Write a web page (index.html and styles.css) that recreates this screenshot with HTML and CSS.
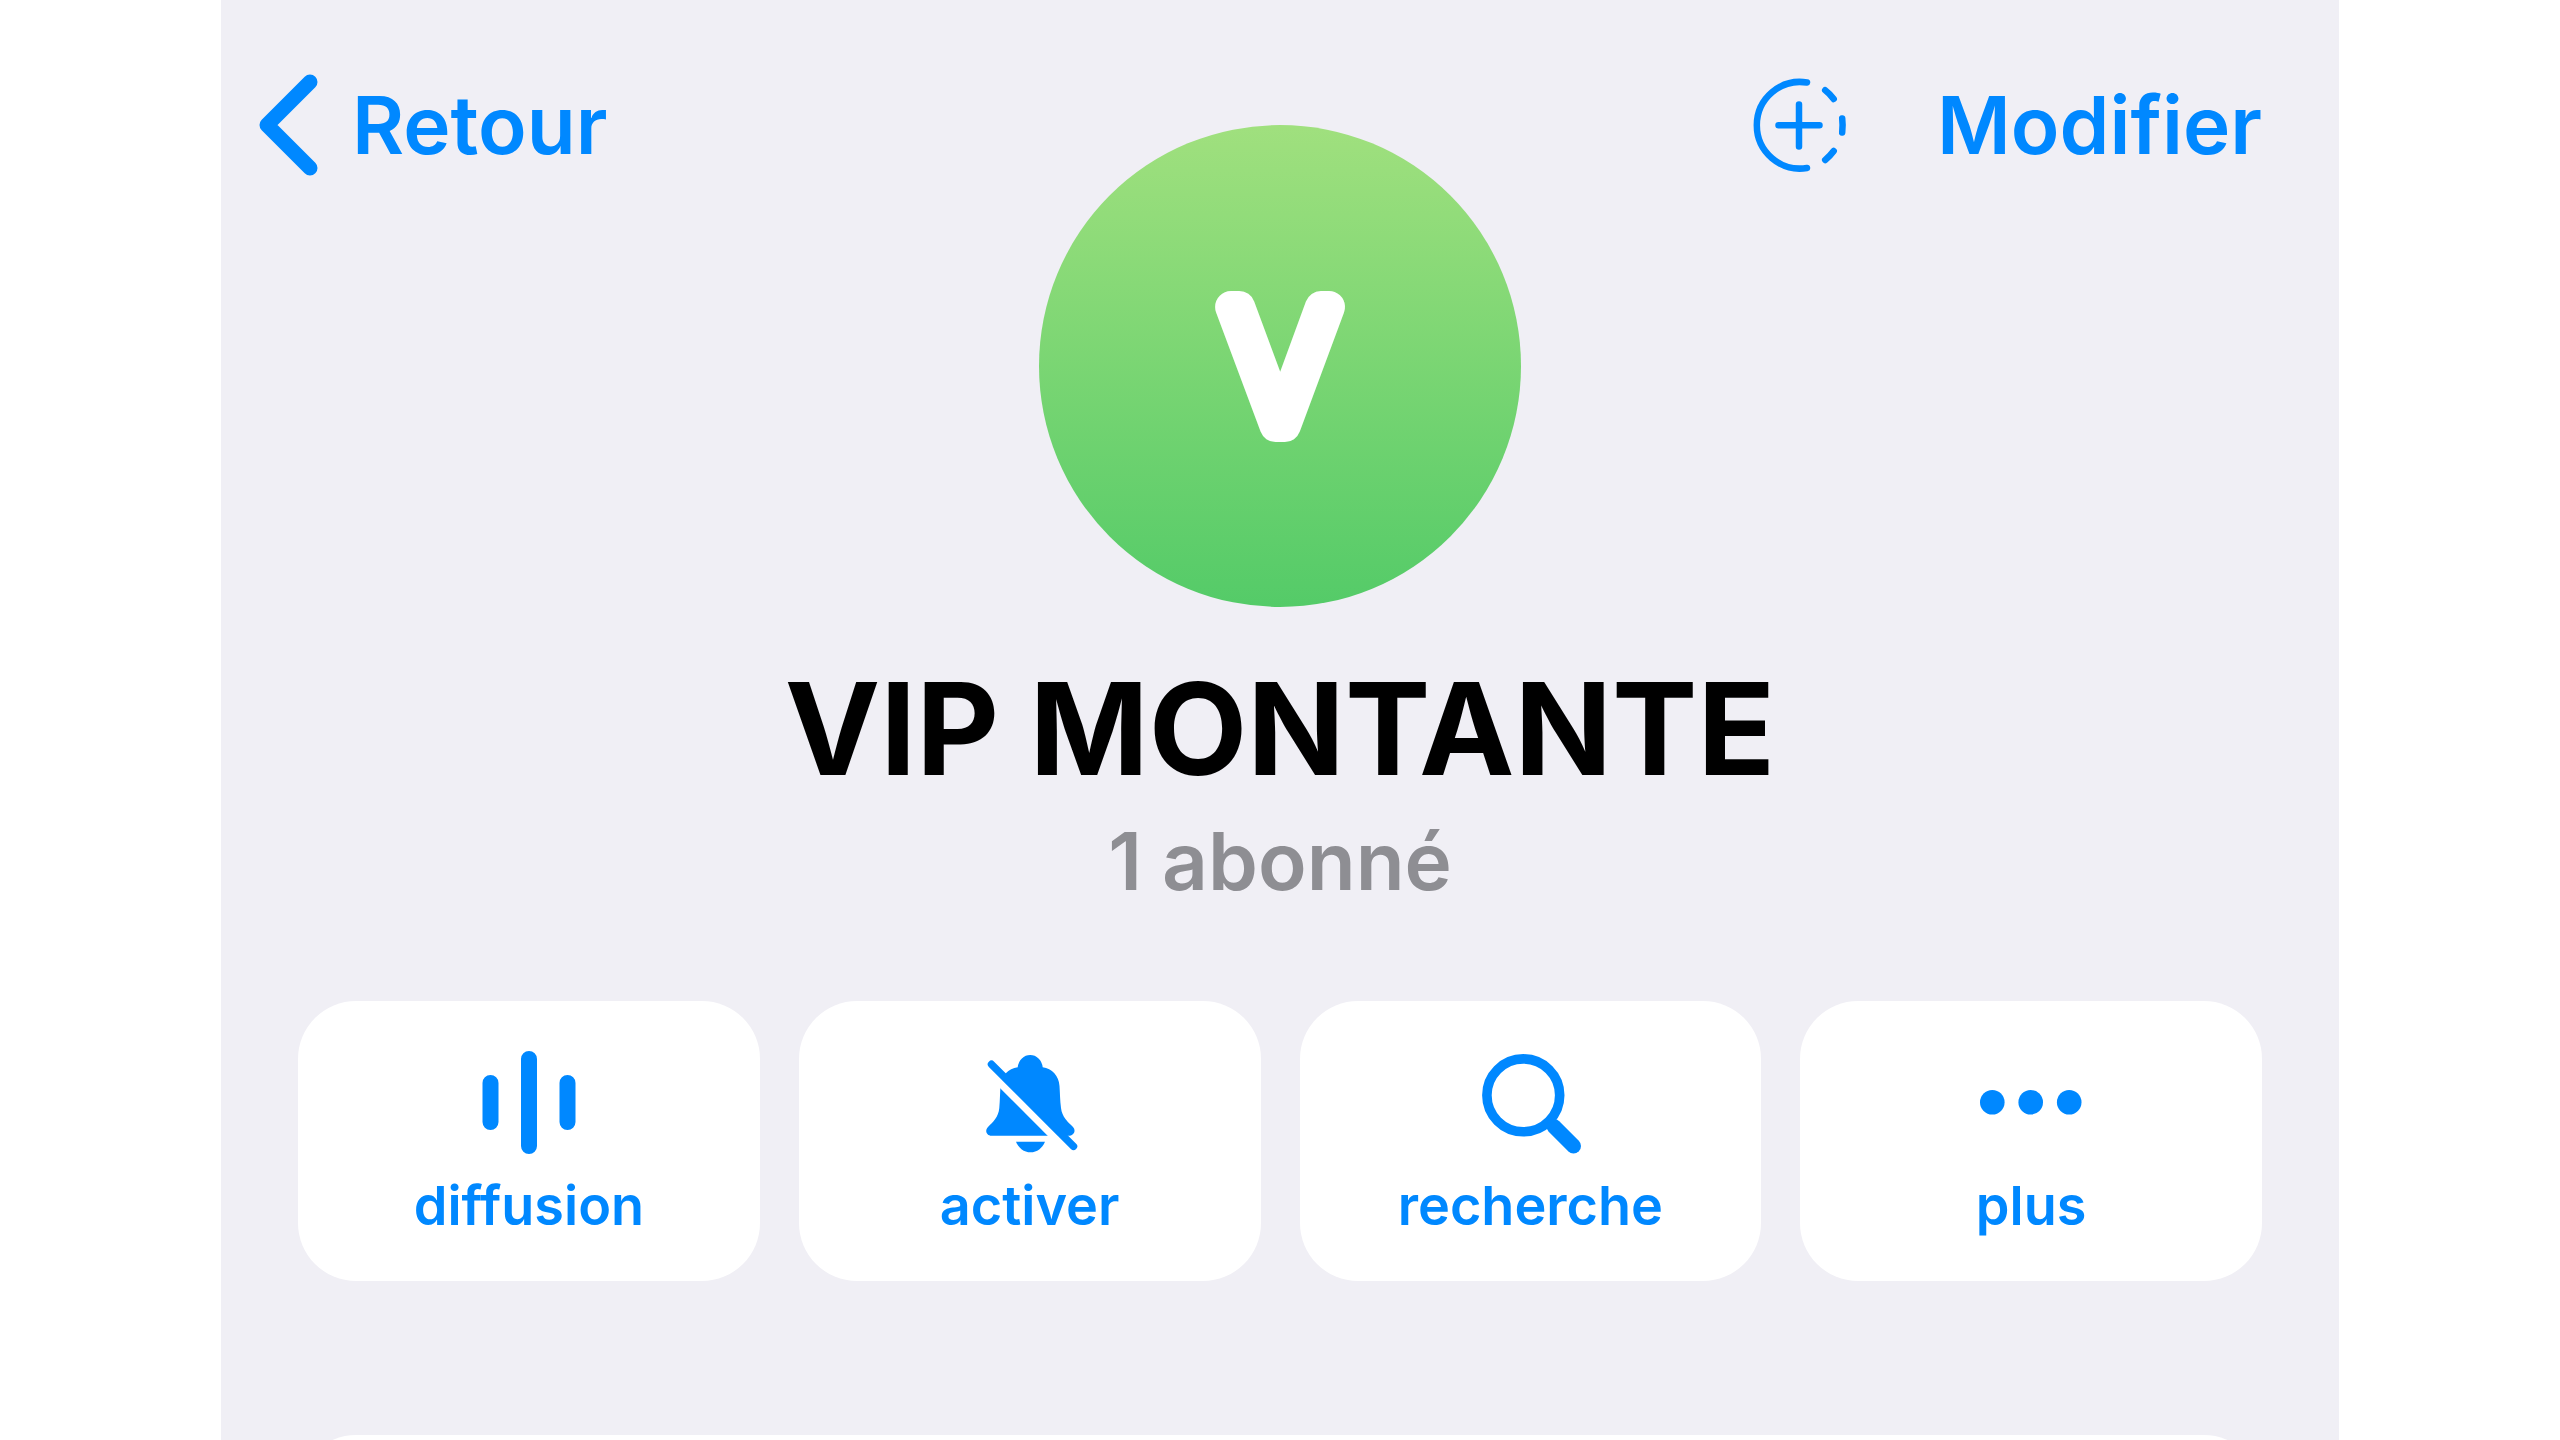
FILE: index.html
```html
<!DOCTYPE html>
<html lang="fr">
<head>
    <meta charset="UTF-8">
    <meta name="viewport" content="width=device-width, initial-scale=1.0">
    <title>VIP MONTANTE</title>
    <link rel="stylesheet" href="styles.css">
</head>
<body>

<main class="screen">
    <!-- Top bar with the avatar in the middle -->
    <header class="top-bar">
        <button class="nav-btn back-btn" type="button">
            <svg class="chevron" viewBox="0 0 60 104" aria-hidden="true">
                <path d="M52 9 L9 52 L52 95"/>
            </svg>
            <span>Retour</span>
        </button>

        <svg class="avatar" viewBox="0 0 482 482" role="img" aria-label="VIP MONTANTE">
            <defs>
                <linearGradient id="avatarFill" x1="0" y1="0" x2="0" y2="1">
                    <stop offset="0" stop-color="#a0e07e"/>
                    <stop offset="1" stop-color="#54cb68"/>
                </linearGradient>
            </defs>
            <circle cx="241" cy="241" r="241" fill="url(#avatarFill)"/>
            <text class="avatar-letter" x="241" y="301" text-anchor="middle">V</text>
        </svg>

        <div class="top-actions">
            <button class="nav-btn" type="button" aria-label="Ajouter une story">
                <svg class="story-icon" viewBox="0 0 96 96" aria-hidden="true">
                    <path d="M56 5.5 A43.3 43.3 0 1 0 56 91"/>
                    <path d="M74.2 13.3 Q79 17 82.7 22 M91.2 41.5 Q92 48 91.2 55.5 M82.7 74 Q79 79 74.2 83"/>
                    <path d="M27.5 48.3 H68.5 M48 27.5 V69.5"/>
                </svg>
            </button>
            <button class="nav-btn" type="button">Modifier</button>
        </div>
    </header>

    <h1>VIP MONTANTE</h1>
    <p class="subscribers">1 abonné</p>

    <!-- Channel actions -->
    <div class="actions">
        <button class="action" type="button">
            <svg viewBox="0 0 104 104" aria-hidden="true">
                <path class="line" stroke-width="16" d="M13.5 33 V72 M52 9 V96 M90.5 33 V72"/>
            </svg>
            <span>diffusion</span>
        </button>
        <button class="action" type="button">
            <svg viewBox="0 0 104 104" aria-hidden="true">
                <path d="M39.7 17.3 A12.6 14 0 0 1 64.7 17.3 C74 18.500 81 26 81.5 36 C82 43 82 50 83 58 C84 67 90 72 95 77 C98.5 81 95.5 85.7 90.5 85.7 H13.5 C8.5 85.7 6.5 80.5 10 77 C15 72 20.5 67 21.3 58 C22 50 22 43 22.5 36 C23 26 30.5 18.5 39.7 17.3 Z"/>
                <path d="M38 91.7 H67 C64.5 98 59 102.3 52.5 102.3 C46 102.3 40.5 98 38 91.7 Z"/>
                <path class="cut" d="M6 16.8 L84 94.8"/>
                <path class="line" stroke-width="7.5" d="M13.5 14.3 L95.5 96.3"/>
            </svg>
            <span>activer</span>
        </button>
        <button class="action" type="button">
            <svg viewBox="0 0 104 104" aria-hidden="true">
                <circle class="line" stroke-width="9.6" cx="45.3" cy="45.3" r="36.4"/>
                <path class="line" stroke-width="15" d="M76 76.5 L95.5 96"/>
            </svg>
            <span>recherche</span>
        </button>
        <button class="action" type="button">
            <svg viewBox="0 0 104 104" aria-hidden="true">
                <circle cx="13.3" cy="52.3" r="12.3"/>
                <circle cx="51.7" cy="52.3" r="12.3"/>
                <circle cx="90.2" cy="52.3" r="12.3"/>
            </svg>
            <span>plus</span>
        </button>
    </div>

    <!-- Next section, cut off by the bottom of the screen -->
    <section class="info-card"></section>
</main>

</body>
</html>
```
FILE: styles.css
```css
* {
    box-sizing: border-box;
}
body {
    margin: 0;
    background-color: #fff;
    font-family: Inter, "Liberation Sans", sans-serif;
}
.screen {
    display: flex;
    flex-direction: column;
    height: 100vh;
    margin: 0 221px;
    overflow: hidden;
    background-color: #f0eff5;
}
button {
    padding: 0;
    border: none;
    background: none;
    color: #0088ff;
    font-family: inherit;
    font-weight: 600;
    cursor: pointer;
}
.top-bar {
    display: grid;
    grid-template-columns: 1fr auto 1fr;
    align-items: start;
    padding: 73px 37px 0;
}
.nav-btn {
    display: flex;
    align-items: center;
    height: 104px;
    font-size: 80px;
    line-height: 96px;
}
.back-btn {
    gap: 34px;
    justify-self: start;
}
.chevron {
    width: 60px;
    height: 104px;
    fill: none;
    stroke: currentColor;
    stroke-width: 15;
    stroke-linecap: round;
    stroke-linejoin: round;
}
.avatar {
    width: 482px;
    height: 482px;
    margin-top: 52px;
}
.avatar-letter {
    fill: #fff;
    stroke: #fff;
    stroke-width: 32px;
    stroke-linejoin: round;
    font-size: 164px;
    font-weight: 200;
}
.top-actions {
    display: flex;
    justify-content: flex-end;
    gap: 90px;
    margin-right: 40px;
}
.story-icon {
    width: 96px;
    height: 96px;
    fill: none;
    stroke: currentColor;
    stroke-width: 6.5;
    stroke-linecap: round;
}
h1 {
    margin: 42px 0 0;
    color: #000;
    font-size: 128px;
    font-weight: 700;
    line-height: 160px;
    text-align: center;
}
.subscribers {
    margin: 4px 0 0;
    color: #8e8e93;
    font-size: 80px;
    font-weight: 600;
    line-height: 96px;
    text-align: center;
}
.actions {
    display: grid;
    grid-template-columns: repeat(4, 1fr);
    gap: 39px;
    margin: 92px 77px 0;
}
.action {
    display: flex;
    flex-direction: column;
    align-items: center;
    gap: 20px;
    padding: 49px 0 43px;
    border-radius: 58px;
    background-color: #fff;
    font-size: 54px;
    line-height: 64px;
}
.action svg {
    width: 104px;
    height: 104px;
    fill: currentColor;
}
.action .line {
    fill: none;
    stroke: currentColor;
    stroke-linecap: round;
}
.action .cut {
    stroke: #fff;
    stroke-width: 7.5;
}
.info-card {
    flex-shrink: 0;
    height: 280px;
    margin: 154px 77px 0;
    border-radius: 58px;
    background-color: #fff;
}
```
